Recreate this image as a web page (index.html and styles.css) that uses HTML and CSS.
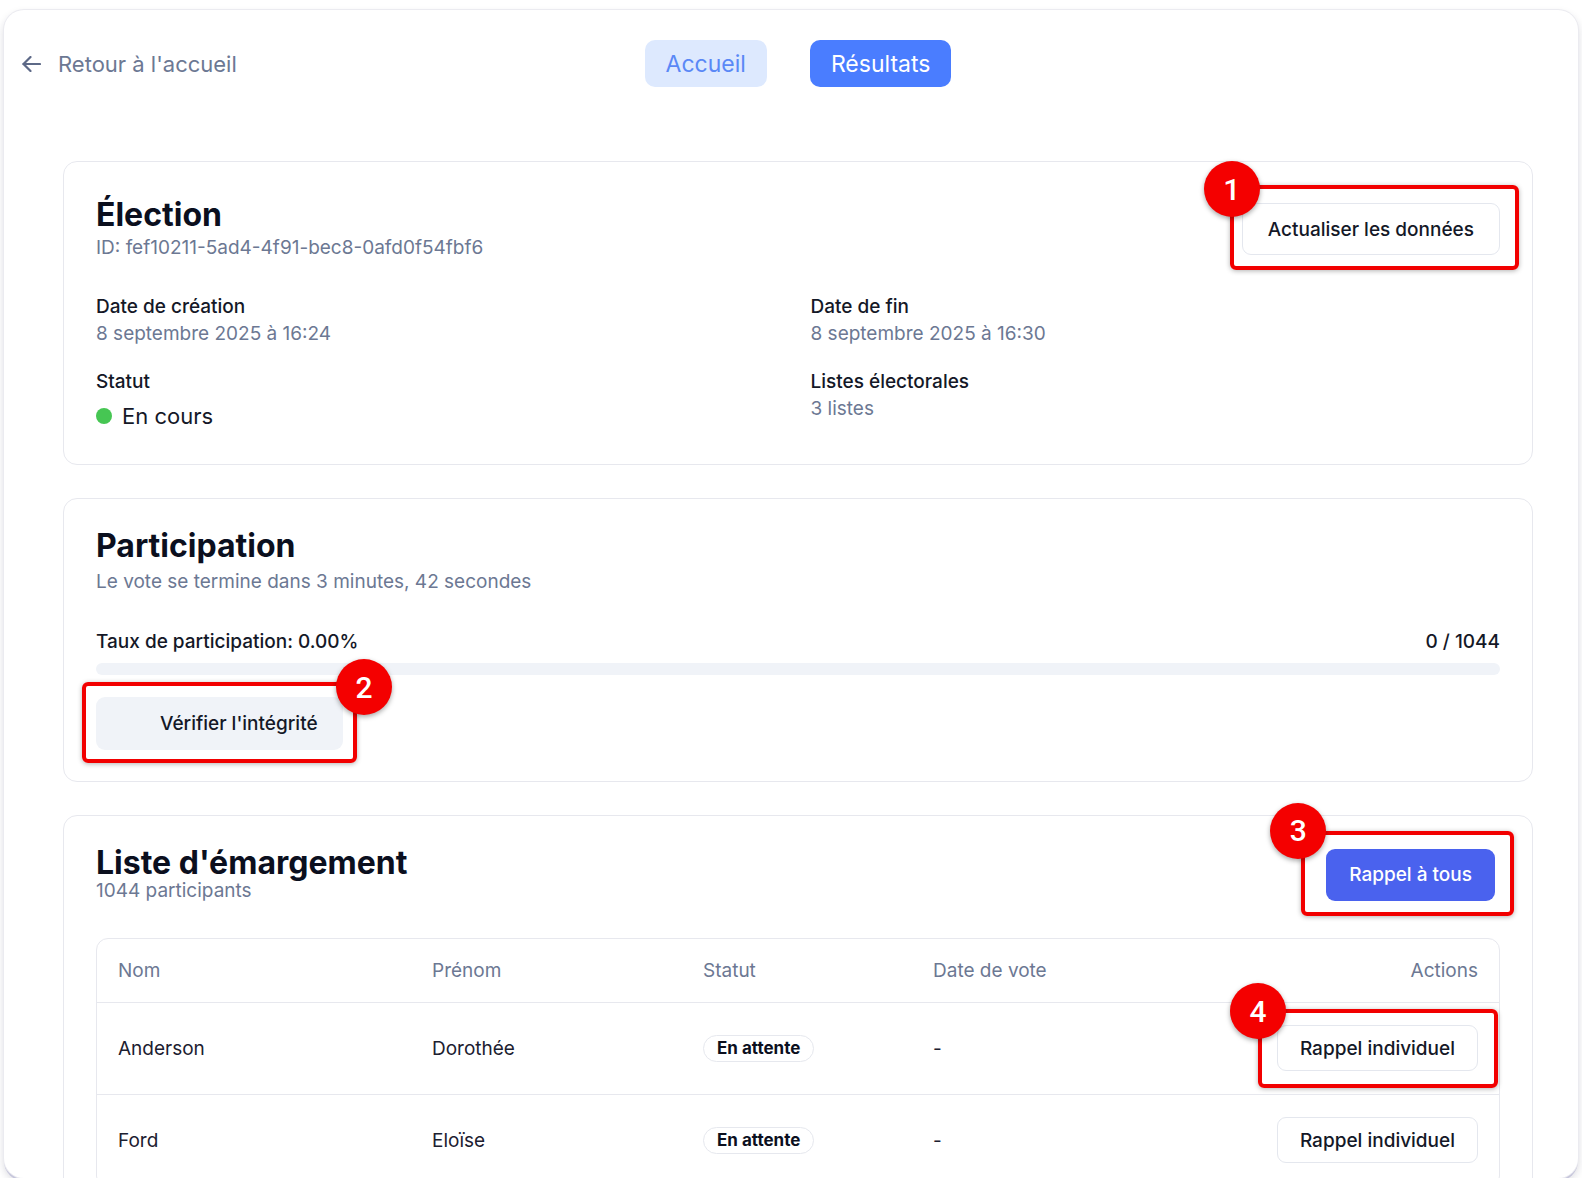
FILE: index.html
```html
<!DOCTYPE html>
<html lang="fr">
<head>
    <meta charset="UTF-8">
    <meta name="viewport" content="width=device-width, initial-scale=1.0">
    <link rel="stylesheet" href="styles.css">
    <title>Résultats de l'élection</title>
</head>
<body>
    <div class="frame">
        <header class="topbar">
            <a class="back" href="#">
                <svg width="19" height="16" viewBox="0 0 19 16" fill="none" stroke="currentColor" stroke-width="2.2" stroke-linecap="round" stroke-linejoin="round">
                    <path d="M18 8H1.5"/>
                    <path d="M8.5 1L1.5 8l7 7"/>
                </svg>
                <span>Retour à l'accueil</span>
            </a>
            <nav class="tabs">
                <a class="tab" href="#">Accueil</a>
                <a class="tab tab-active" href="#">Résultats</a>
            </nav>
            <div></div>
        </header>

        <main class="content">
            <section class="card card-election">
                <div class="card-head card-head-election">
                    <div>
                        <h1 class="card-title">Élection</h1>
                        <p class="card-sub sub-election">ID: fef10211-5ad4-4f91-bec8-0afd0f54fbf6</p>
                    </div>
                    <div class="callout callout-1">
                        <span class="marker">1</span>
                        <button class="btn btn-outline">Actualiser les données</button>
                    </div>
                </div>
                <div class="info-grid">
                    <div class="info">
                        <div class="info-label">Date de création</div>
                        <div class="info-value">8 septembre 2025 à 16:24</div>
                    </div>
                    <div class="info">
                        <div class="info-label">Date de fin</div>
                        <div class="info-value">8 septembre 2025 à 16:30</div>
                    </div>
                    <div class="info">
                        <div class="info-label">Statut</div>
                        <div class="status"><span class="dot"></span>En cours</div>
                    </div>
                    <div class="info">
                        <div class="info-label">Listes électorales</div>
                        <div class="info-value">3 listes</div>
                    </div>
                </div>
            </section>

            <section class="card card-participation">
                <h2 class="card-title">Participation</h2>
                <p class="card-sub sub-participation">Le vote se termine dans 3 minutes, 42 secondes</p>
                <div class="rate">
                    <span>Taux de participation: 0.00%</span>
                    <span>0 / 1044</span>
                </div>
                <div class="progress"><div class="progress-fill" style="width: 0%"></div></div>
                <div class="callout callout-2">
                    <span class="marker">2</span>
                    <button class="btn btn-soft">Vérifier l'intégrité</button>
                </div>
            </section>

            <section class="card">
                <div class="card-head">
                    <div>
                        <h2 class="card-title">Liste d'émargement</h2>
                        <p class="card-sub sub-list">1044 participants</p>
                    </div>
                    <div class="callout callout-3">
                        <span class="marker">3</span>
                        <button class="btn btn-primary">Rappel à tous</button>
                    </div>
                </div>
                <div class="table-wrap">
                    <table class="voters">
                        <colgroup>
                            <col class="col-nom">
                            <col class="col-prenom">
                            <col class="col-statut">
                            <col class="col-date">
                            <col>
                        </colgroup>
                        <thead>
                            <tr>
                                <th>Nom</th>
                                <th>Prénom</th>
                                <th>Statut</th>
                                <th>Date de vote</th>
                                <th class="right">Actions</th>
                            </tr>
                        </thead>
                        <tbody>
                            <tr>
                                <td>Anderson</td>
                                <td>Dorothée</td>
                                <td><span class="badge">En attente</span></td>
                                <td>-</td>
                                <td class="right">
                                    <div class="callout callout-4">
                                        <span class="marker">4</span>
                                        <button class="btn btn-outline btn-row">Rappel individuel</button>
                                    </div>
                                </td>
                            </tr>
                            <tr>
                                <td>Ford</td>
                                <td>Eloïse</td>
                                <td><span class="badge">En attente</span></td>
                                <td>-</td>
                                <td class="right"><button class="btn btn-outline btn-row">Rappel individuel</button></td>
                            </tr>
                        </tbody>
                    </table>
                </div>
            </section>
        </main>
    </div>
</body>
</html>
```

FILE: styles.css
```css
* {
    box-sizing: border-box;
}

html, body {
    margin: 0;
    background-color: #ffffff;
}

body {
    font-family: "Inter", "Noto Sans", sans-serif;
    font-size: 19px;
    color: #141827;
}

.frame {
    margin: 10px 4px 0;
    height: 1168px;
    padding-top: 30px;
    border-radius: 20px;
    background-color: #ffffff;
    overflow: hidden;
    box-shadow: 0 0 0 1px #ebebf0, 0 3px 0 #c6c6dc, 0 4px 8px rgba(30, 30, 60, 0.18);
}

/* top navigation */

.topbar {
    display: grid;
    grid-template-columns: 1fr auto 1fr;
    align-items: center;
    padding: 0 4px 0 18px;
}

.back {
    display: flex;
    align-items: center;
    gap: 17px;
    color: #6c7893;
    font-size: 22px;
    text-decoration: none;
}

.back svg {
    color: #5d6987;
}

.tabs {
    display: flex;
    gap: 43px;
}

.tab {
    display: flex;
    align-items: center;
    height: 47px;
    padding: 0 21px;
    border-radius: 10px;
    font-size: 23px;
    text-decoration: none;
    background-color: #dde9fe;
    color: #5a88f6;
}

.tab-active {
    background-color: #4a7dff;
    color: #ffffff;
}

/* cards */

.content {
    display: flex;
    flex-direction: column;
    gap: 33px;
    padding: 74px 45px 0 59px;
}

.card {
    border: 1.5px solid #e7e8ee;
    border-radius: 14px;
    padding: 29px 32px 31px;
    background-color: #ffffff;
}

.card-election {
    padding-bottom: 33px;
}

.card-participation {
    padding-bottom: 31px;
}

.card-head {
    display: flex;
    justify-content: space-between;
    align-items: center;
}

.card-head-election {
    margin-top: 6px;
}

.card-title {
    margin: 0;
    font-size: 32px;
    line-height: 36px;
    font-weight: 700;
    color: #0b0f1e;
}

.card-sub {
    margin: 0;
    line-height: 26px;
    color: #6c7893;
}

.sub-election {
    margin-top: 2px;
}

.sub-participation {
    margin-top: 5px;
}

.sub-list {
    margin-top: -3px;
}

.info-grid {
    display: grid;
    grid-template-columns: 1fr 1fr;
    column-gap: 25px;
    row-gap: 22px;
    margin-top: 33px;
}

.info-label {
    line-height: 26px;
    font-weight: 500;
    color: #141827;
}

.info-value {
    margin-top: 1px;
    line-height: 26px;
    color: #6c7893;
}

.status {
    display: flex;
    align-items: center;
    gap: 10px;
    margin-top: 6px;
    font-size: 22px;
    line-height: 30px;
    color: #141827;
}

.dot {
    width: 16px;
    height: 16px;
    border-radius: 50%;
    background-color: #46c653;
}

.rate {
    display: flex;
    justify-content: space-between;
    margin-top: 34px;
    line-height: 26px;
    font-weight: 500;
}

.progress {
    height: 12px;
    margin-top: 8px;
    border-radius: 6px;
    background-color: #f0f3f8;
    overflow: hidden;
}

.progress-fill {
    height: 100%;
    background-color: #4a7dff;
}

.callout-2 {
    margin-top: 22px;
}

/* buttons */

.btn {
    font-family: inherit;
    font-size: 19px;
    font-weight: 500;
    color: #141827;
    border-radius: 9px;
    cursor: pointer;
}

.btn-outline {
    height: 52px;
    padding: 0 25px;
    border: 1.5px solid #e4e7ee;
    background-color: #ffffff;
}

.btn-soft {
    height: 53px;
    padding: 0 25px 0 64px;
    border: none;
    background-color: #f0f3f8;
}

.btn-primary {
    height: 52px;
    padding: 0 23px;
    border: none;
    background-color: #4a62ee;
    color: #ffffff;
}

.btn-row {
    height: 46px;
    padding: 0 22px;
}

/* numbered callouts */

.callout {
    position: relative;
    display: inline-flex;
}

.callout::before {
    content: "";
    position: absolute;
    border: 4px solid #f20000;
    border-radius: 6px;
    box-shadow: 0 1px 5px rgba(0, 0, 0, 0.3);
    pointer-events: none;
}

.callout-1::before {
    inset: -18px -19px -15px -12px;
}

.callout-2::before {
    inset: -15px -14px -13px -14px;
}

.callout-3 {
    margin-right: 5px;
}

.callout-3::before {
    inset: -18px -19px -15px -25px;
}

.callout-4::before {
    inset: -16px -20px -17px -19px;
}

.marker {
    position: absolute;
    z-index: 1;
    display: flex;
    align-items: center;
    justify-content: center;
    width: 56px;
    height: 56px;
    border-radius: 50%;
    background-color: #f40000;
    box-shadow: 0 2px 5px rgba(0, 0, 0, 0.35);
    color: #ffffff;
    font-family: "Roboto", "Liberation Sans", sans-serif;
    font-size: 30px;
    font-weight: 500;
}

.callout-1 .marker {
    left: -38px;
    top: -42px;
}

.callout-2 .marker {
    left: 240px;
    top: -38px;
}

.callout-3 .marker {
    left: -56px;
    top: -46px;
}

.callout-4 .marker {
    left: -47px;
    top: -42px;
}

/* table */

.table-wrap {
    margin-top: 34px;
    border: 1.5px solid #e7e8ee;
    border-radius: 12px;
}

.voters {
    width: 100%;
    border-collapse: collapse;
    table-layout: fixed;
}

.col-nom {
    width: 314px;
}

.col-prenom {
    width: 271px;
}

.col-statut {
    width: 230px;
}

.col-date {
    width: 300px;
}

.voters th {
    height: 63px;
    padding: 0 21px;
    text-align: left;
    font-weight: 400;
    color: #6c7893;
    border-bottom: 1.5px solid #e7e8ee;
}

.voters td {
    height: 92px;
    padding: 0 21px;
    color: #1c2030;
    border-bottom: 1.5px solid #e7e8ee;
}

.voters .right {
    text-align: right;
}

.badge {
    display: inline-flex;
    align-items: center;
    height: 27px;
    padding: 0 13px;
    border: 1.5px solid #e6e8ee;
    border-radius: 14px;
    font-size: 17px;
    font-weight: 700;
    color: #0b0f1e;
}
```
